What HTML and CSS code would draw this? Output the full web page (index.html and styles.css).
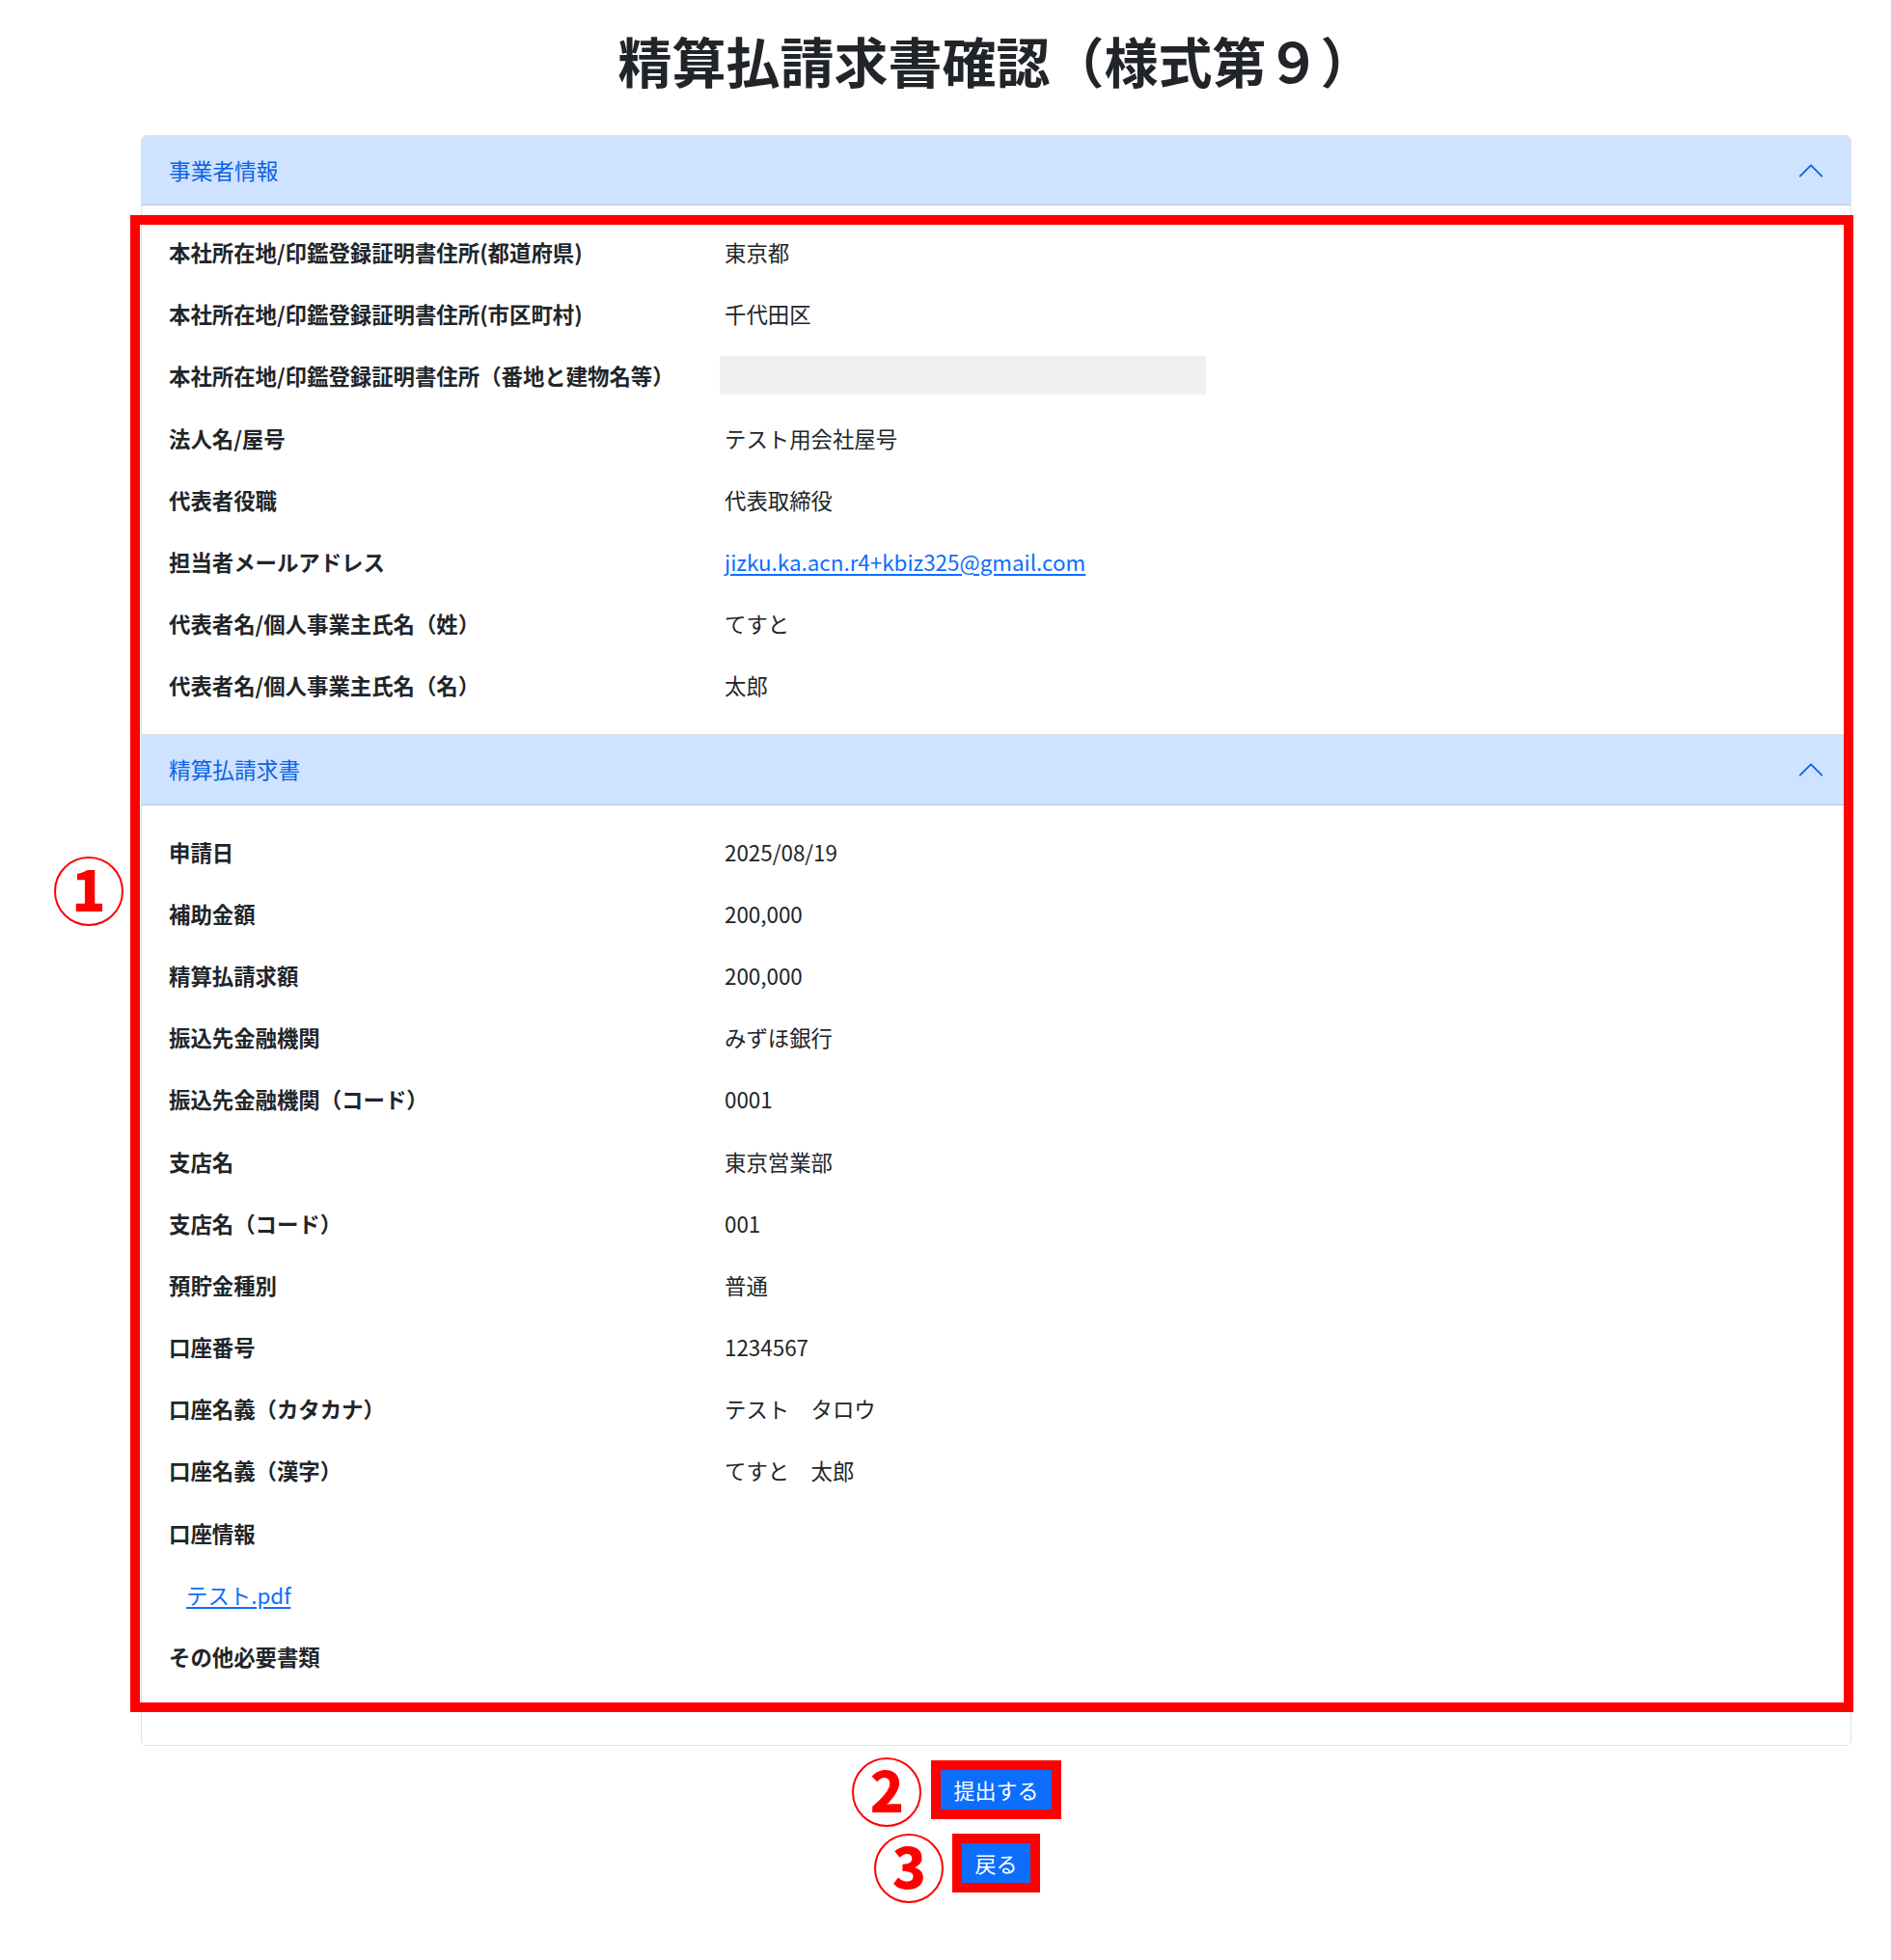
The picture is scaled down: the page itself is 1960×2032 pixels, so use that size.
FILE: index.html
```html
<!DOCTYPE html>
<html lang="ja">
<head>
<meta charset="utf-8">
<title>精算払請求書確認（様式第９）</title>
<link rel="stylesheet" href="styles.css">
</head>
<body>
<main class="page">
  <h1 class="page-title">精算払請求書確認（様式第９）</h1>

  <div class="accordion">
    <section class="acc-item">
      <div class="acc-header">
        <span class="acc-title">事業者情報</span>
        <svg class="acc-icon" viewBox="0 0 16 16" fill="none" stroke="#0c63e4" stroke-linecap="round" stroke-linejoin="round"><path d="M2 11L8 5L14 11"/></svg>
      </div>
      <div class="acc-body">
        <div class="row"><div class="label">本社所在地/印鑑登録証明書住所(都道府県)</div><div class="value">東京都</div></div>
        <div class="row"><div class="label">本社所在地/印鑑登録証明書住所(市区町村)</div><div class="value">千代田区</div></div>
        <div class="row"><div class="label">本社所在地/印鑑登録証明書住所（番地と建物名等）</div><div class="value"><div class="empty-field"></div></div></div>
        <div class="row"><div class="label">法人名/屋号</div><div class="value">テスト用会社屋号</div></div>
        <div class="row"><div class="label">代表者役職</div><div class="value">代表取締役</div></div>
        <div class="row"><div class="label">担当者メールアドレス</div><div class="value"><a class="link" href="#">jizku.ka.acn.r4+kbiz325@gmail.com</a></div></div>
        <div class="row"><div class="label">代表者名/個人事業主氏名（姓）</div><div class="value">てすと</div></div>
        <div class="row"><div class="label">代表者名/個人事業主氏名（名）</div><div class="value">太郎</div></div>
      </div>
    </section>

    <section class="acc-item acc-item-next">
      <div class="acc-header">
        <span class="acc-title">精算払請求書</span>
        <svg class="acc-icon" viewBox="0 0 16 16" fill="none" stroke="#0c63e4" stroke-linecap="round" stroke-linejoin="round"><path d="M2 11L8 5L14 11"/></svg>
      </div>
      <div class="acc-body acc-body-last">
        <div class="row"><div class="label">申請日</div><div class="value">2025/08/19</div></div>
        <div class="row"><div class="label">補助金額</div><div class="value">200,000</div></div>
        <div class="row"><div class="label">精算払請求額</div><div class="value">200,000</div></div>
        <div class="row"><div class="label">振込先金融機関</div><div class="value">みずほ銀行</div></div>
        <div class="row"><div class="label">振込先金融機関（コード）</div><div class="value">0001</div></div>
        <div class="row"><div class="label">支店名</div><div class="value">東京営業部</div></div>
        <div class="row"><div class="label">支店名（コード）</div><div class="value">001</div></div>
        <div class="row"><div class="label">預貯金種別</div><div class="value">普通</div></div>
        <div class="row"><div class="label">口座番号</div><div class="value">1234567</div></div>
        <div class="row"><div class="label">口座名義（カタカナ）</div><div class="value">テスト　タロウ</div></div>
        <div class="row"><div class="label">口座名義（漢字）</div><div class="value">てすと　太郎</div></div>
        <div class="row"><div class="label">口座情報</div><div class="value"></div></div>
        <div class="row file-row"><a class="link" href="#">テスト.pdf</a></div>
        <div class="row"><div class="label">その他必要書類</div><div class="value"></div></div>
      </div>
    </section>

    <div class="callout callout-body"><span class="num num-body">1</span></div>
  </div>

  <div class="actions">
    <span class="callout-btn"><span class="num num-2">2</span><button class="btn" type="button">提出する</button></span>
    <span class="callout-btn"><span class="num num-3">3</span><button class="btn" type="button">戻る</button></span>
  </div>
</main>
</body>
</html>
```

FILE: styles.css
```css
html, body {
  margin: 0;
  padding: 0;
  background: #ffffff;
}

body {
  font-family: "Noto Sans CJK JP", "Noto Sans", sans-serif;
  color: #212529;
  font-size: 22.4px;
}

.page {
  width: 1773px;
  margin-left: 146px;
  padding-bottom: 70px;
}

.page-title {
  margin: 0 0 38px;
  padding-top: 22px;
  font-size: 56px;
  line-height: 80px;
  font-weight: 700;
  text-align: center;
  color: #212529;
}

/* accordion card */
.accordion {
  position: relative;
  border: 1px solid #dee2e6;
  border-radius: 6px;
}

.acc-item-next {
  border-top: 1px solid #dee2e6;
}

.acc-header {
  display: flex;
  align-items: center;
  height: 72px;
  padding: 0 26px 0 28px;
  background: #cfe2ff;
  box-shadow: inset 0 -1px 0 rgba(0, 0, 0, 0.125);
  color: #0c63e4;
  box-sizing: border-box;
}

.acc-item:first-child .acc-header {
  border-radius: 5px 5px 0 0;
}

.acc-item-next .acc-header {
  height: 73px;
}

.acc-title {
  font-size: 22.7px;
  line-height: 30px;
  margin-top: -1px;
}

.acc-icon {
  width: 30px;
  height: 30px;
  margin-left: auto;
}

.acc-body {
  padding: 16px 0 18px 28px;
}

.acc-body-last {
  padding: 16px 0 60px 28px;
}

.row {
  display: grid;
  grid-template-columns: 576px 1fr;
  align-items: center;
  height: 64.2px;
}

.label {
  font-weight: 700;
  line-height: 32px;
  white-space: nowrap;
}

.value {
  line-height: 32px;
}

.empty-field {
  width: 504px;
  height: 40px;
  margin-left: -5px;
  background: #f0f0f0;
}

.link {
  color: #0d6efd;
  text-decoration: underline;
  text-underline-offset: 3px;
}

.file-row {
  display: flex;
  padding-left: 18px;
  line-height: 32px;
}

/* red callouts */
.callout {
  position: absolute;
  border: 10px solid #ff0000;
  box-sizing: border-box;
}

.callout-body {
  left: -12px;
  top: 82px;
  width: 1786px;
  height: 1552px;
}

.num {
  position: absolute;
  display: flex;
  align-items: center;
  justify-content: center;
  width: 68px;
  height: 60px;
  padding-bottom: 8px;
  box-sizing: content-box;
  border: 2.5px solid #ff0000;
  border-radius: 50%;
  color: #ff0000;
  font-family: "Noto Sans CJK JP", "Noto Sans", sans-serif;
  font-weight: 900;
  font-size: 58px;
  line-height: 1;
}

.num-body {
  left: -89px;
  top: 655px;
}

.actions {
  display: flex;
  flex-direction: column;
  align-items: center;
  gap: 15px;
  margin-top: 15px;
}

.callout-btn {
  position: relative;
  display: block;
  border: 10px solid #ff0000;
}

.btn {
  display: block;
  height: 41px;
  margin: 0;
  padding: 0 13px;
  border: 0;
  border-radius: 0;
  background: #0d6efd;
  color: #ffffff;
  font-family: "Noto Sans CJK JP", "Noto Sans", sans-serif;
  font-size: 22px;
  line-height: 41px;
}

.num-2 {
  right: calc(100% + 20px);
  top: 50%;
  margin-top: -34px;
}

.num-3 {
  right: calc(100% + 19px);
  top: 50%;
  margin-top: -31px;
}
```
